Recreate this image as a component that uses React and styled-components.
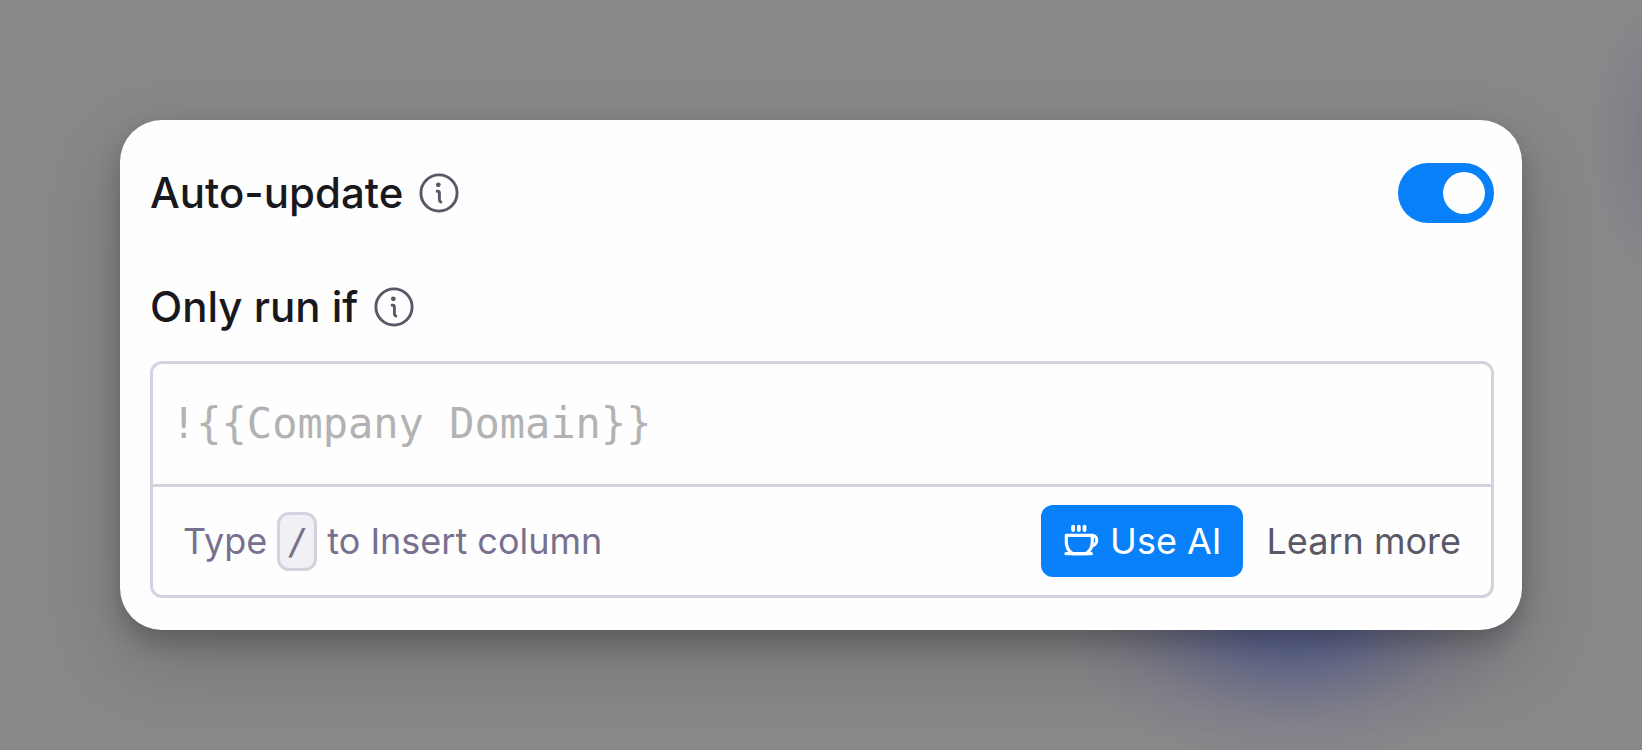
import React, { useState } from "react";
import styled, { createGlobalStyle } from "styled-components";

const InfoIcon = () => (
  <Icon $size={40} viewBox="0 0 40 40" fill="none" stroke="#5b5766">
    <circle cx="20" cy="20" r="18.1" strokeWidth="2.9" />
    <circle cx="19.3" cy="11.8" r="2.4" fill="#5b5766" stroke="none" />
    <path
      d="M18.1 18.2h.7q1.6 0 1.6 1.6v7.2q0 1.6 1.5 2"
      strokeWidth="2.9"
      strokeLinecap="round"
    />
  </Icon>
);

const CupIcon = () => (
  <Icon $size={36} viewBox="0 0 36 36" fill="none" stroke="#fff">
    <path
      d="M10.1 3.6v3.4M15.8 3.6v3.4M21.5 3.6v3.4"
      strokeWidth="3.8"
      strokeLinecap="round"
    />
    <path
      d="M3.3 12.3h26v7.3c0 4.8-2.7 8.6-6.2 11H9.5c-3.7-2.4-6.2-6.2-6.2-11z"
      strokeWidth="3.2"
      strokeLinejoin="round"
    />
    <path d="M29 12.3c6.4 0 6.7 10.4-1.4 10.8" strokeWidth="3.2" />
    <path d="M3 30.7h25.3" strokeWidth="3.2" strokeLinecap="round" />
  </Icon>
);

function App() {
  const [autoUpdate, setAutoUpdate] = useState(true);

  return (
    <Backdrop>
      <GlobalStyle />
      <Card>
        <Row>
          <Label>Auto-update</Label>
          <InfoIcon />
          <Toggle
            role="switch"
            aria-label="Auto-update"
            aria-checked={autoUpdate}
            $on={autoUpdate}
            onClick={() => setAutoUpdate(!autoUpdate)}
          >
            <Thumb />
          </Toggle>
        </Row>
        <Row $top={54}>
          <Label>Only run if</Label>
          <InfoIcon />
        </Row>
        <Editor>
          <Formula>{"!{{Company Domain}}"}</Formula>
          <Footer>
            <Hint>
              Type <Key>/</Key> to Insert column
            </Hint>
            <Actions>
              <AiButton>
                <CupIcon />
                Use AI
              </AiButton>
              <LearnMore>Learn more</LearnMore>
            </Actions>
          </Footer>
        </Editor>
      </Card>
    </Backdrop>
  );
}

const GlobalStyle = createGlobalStyle`
  * {
    box-sizing: border-box;
  }
  body {
    margin: 0;
    font-family: "Inter", sans-serif;
  }
  button {
    border: none;
    font-family: inherit;
    cursor: pointer;
  }
`;

const Backdrop = styled.main`
  height: 100vh;
  padding: 120px;
  overflow: hidden;
  background:
    radial-gradient(
      ellipse 235px 160px at 1292px 605px,
      rgba(90, 99, 148, 0.95) 0%,
      rgba(90, 99, 148, 0.82) 28%,
      rgba(94, 101, 144, 0.5) 52%,
      rgba(104, 108, 140, 0.2) 76%,
      rgba(114, 115, 138, 0) 100%
    ),
    radial-gradient(
      ellipse 75px 140px at 1665px 140px,
      rgba(96, 102, 130, 0.55) 0%,
      rgba(96, 102, 130, 0.2) 45%,
      rgba(96, 102, 130, 0) 100%
    ),
    #8a878a;
`;

const Card = styled.section`
  width: 1402px;
  height: 510px;
  padding: 43px 28px 32px 30px;
  border-radius: 42px;
  background: #fefefe;
  box-shadow:
    0 12px 24px rgba(0, 0, 0, 0.2),
    0 30px 75px rgba(0, 0, 0, 0.18);
`;

const Row = styled.div`
  display: flex;
  align-items: center;
  gap: 16px;
  height: 60px;
  margin-top: ${({ $top }) => $top || 0}px;
`;

const Label = styled.span`
  color: #19181c;
  font-size: 42px;
  font-weight: 500;
  line-height: 60px;
`;

const Icon = styled.svg`
  width: ${({ $size }) => $size}px;
  height: ${({ $size }) => $size}px;
  flex-shrink: 0;
`;

const Toggle = styled.button`
  display: flex;
  align-items: center;
  justify-content: ${({ $on }) => ($on ? "flex-end" : "flex-start")};
  width: 96px;
  height: 60px;
  margin-left: auto;
  padding: 9px;
  border-radius: 30px;
  background: ${({ $on }) => ($on ? "#0780fa" : "#d5d2e0")};
`;

const Thumb = styled.span`
  width: 42px;
  height: 42px;
  border-radius: 50%;
  background: #fefefe;
`;

const Editor = styled.div`
  height: 237px;
  margin-top: 24px;
  border: 3px solid #d5d2e0;
  border-radius: 12px;
`;

const Formula = styled.div`
  height: 123px;
  padding: 30px 18px;
  border-bottom: 3px solid #d5d2e0;
  color: #b3b2b3;
  font-family: "DejaVu Sans Mono", monospace;
  font-size: 42px;
  line-height: 60px;
`;

const Footer = styled.div`
  display: flex;
  align-items: center;
  justify-content: space-between;
  height: 108px;
  padding: 0 30px;
`;

const Hint = styled.div`
  display: flex;
  align-items: center;
  gap: 10px;
  color: #77718f;
  font-size: 36px;
`;

const Key = styled.kbd`
  display: flex;
  align-items: center;
  justify-content: center;
  width: 40px;
  height: 59px;
  border: 3px solid #d5d2e0;
  border-radius: 12px;
  background: #f1f0f4;
  color: #77728c;
  font-family: "DejaVu Sans Mono", monospace;
  font-size: 36px;
`;

const Actions = styled.div`
  display: flex;
  align-items: center;
  gap: 24px;
`;

const AiButton = styled.button`
  display: flex;
  align-items: center;
  gap: 11px;
  height: 72px;
  padding: 0 21px 0 22px;
  border-radius: 12px;
  background: #0780fa;
  color: #fefefe;
  font-size: 36px;
`;

const LearnMore = styled.a`
  color: #5a5766;
  font-size: 36px;
`;

export default App;
